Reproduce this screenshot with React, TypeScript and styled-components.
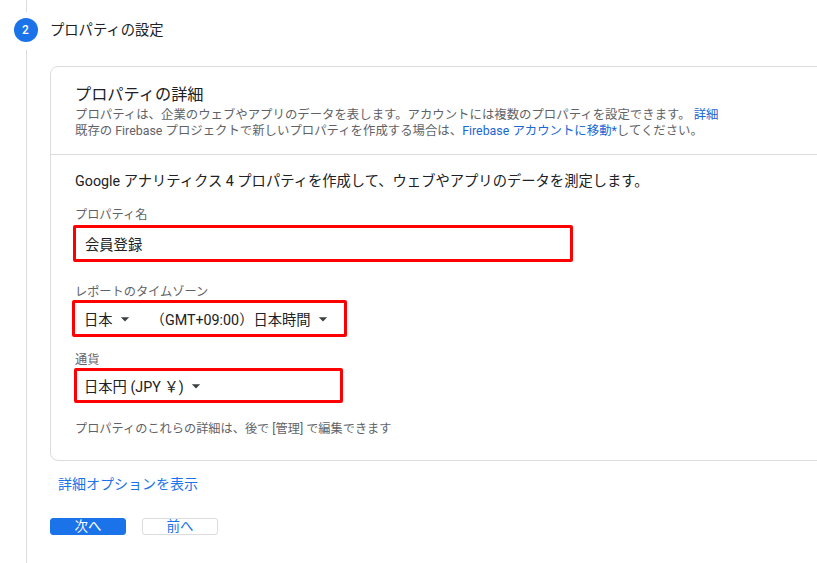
import React from 'react';
import styled, { createGlobalStyle } from 'styled-components';

const GlobalStyle = createGlobalStyle`
  html, body {
    margin: 0;
    padding: 0;
    background: #ffffff;
    font-family: Roboto, "Noto Sans CJK JP", sans-serif;
    color: #202124;
    overflow: hidden;
  }
`;

const Page = styled.div`
  display: grid;
  grid-template-columns: 50px 1fr;
  min-height: 563px;
`;

const Rail = styled.div`
  display: flex;
  flex-direction: column;
  align-items: center;
`;

const RailLine = styled.div<{ $grow?: boolean; $h?: number }>`
  width: 1px;
  background: #dadce0;
  margin-left: 3px;
  height: ${p => (p.$h ? `${p.$h}px` : 'auto')};
  flex: ${p => (p.$grow ? 1 : 'none')};
`;

const StepCircle = styled.div`
  width: 24px;
  height: 24px;
  border-radius: 50%;
  background: #1a73e8;
  color: #fff;
  font-size: 12px;
  font-weight: 500;
  display: flex;
  align-items: center;
  justify-content: center;
  margin: 6px 0 8px 1px;
`;

const Content = styled.div`
  overflow: hidden;
  padding-top: 18px;
`;

const StepTitle = styled.div`
  font-size: 14.3px;
  line-height: 24px;
  height: 24px;
  color: #202124;
`;

const Card = styled.div`
  margin-top: 24px;
  width: calc(100% + 20px);
  border: 1px solid #dadce0;
  border-radius: 8px;
  box-sizing: border-box;
`;

const CardHeader = styled.div`
  padding: 16px 24px 15px;
  border-bottom: 1px solid #dadce0;
`;

const CardTitle = styled.div`
  font-size: 16.2px;
  line-height: 24px;
  color: #202124;
`;

const Desc = styled.div`
  font-size: 12.4px;
  line-height: 16px;
  color: #5f6368;
  white-space: nowrap;
`;

const Link = styled.a`
  color: #1967d2;
  text-decoration: none;
`;

const CardBody = styled.div`
  padding: 16px 24px 23px;
`;

const Intro = styled.div`
  font-size: 14.3px;
  line-height: 20px;
  color: #202124;
  margin-bottom: 16px;
`;

const FieldLabel = styled.div<{ $gap: number; $top?: number }>`
  font-size: 12.2px;
  line-height: 16px;
  color: #5f6368;
  margin-top: ${p => p.$top ?? 0}px;
  margin-bottom: ${p => p.$gap}px;
`;

const Highlight = styled.div<{ $w: number; $h: number; $shift: number; $pad: number }>`
  width: ${p => p.$w}px;
  height: ${p => p.$h}px;
  margin-left: ${p => p.$shift}px;
  border: 3px solid #ff0000;
  border-radius: 2px;
  box-sizing: border-box;
  display: flex;
  align-items: center;
  padding-left: ${p => p.$pad}px;
  font-size: 14.3px;
  color: #202124;
`;

const Select = styled.span<{ $gap?: number }>`
  display: inline-flex;
  align-items: center;
  margin-right: ${p => p.$gap ?? 0}px;
  white-space: nowrap;
`;

const Caret = styled.svg`
  width: 20px;
  height: 20px;
  margin-left: 2px;
  fill: #3c4043;
`;

const Note = styled.div`
  margin-top: 18px;
  font-size: 12.2px;
  line-height: 16px;
  color: #5f6368;
`;

const MoreLink = styled.a`
  display: block;
  margin: 13px 0 0 8px;
  font-size: 14px;
  line-height: 20px;
  color: #1a73e8;
  text-decoration: none;
`;

const Actions = styled.div`
  display: flex;
  gap: 16px;
  margin-top: 24px;
`;

const Button = styled.button<{ $primary?: boolean }>`
  width: 76px;
  height: 17px;
  padding: 0;
  border-radius: 3px;
  font-family: inherit;
  font-size: 13.5px;
  line-height: 15px;
  cursor: pointer;
  box-sizing: border-box;
  border: 1px solid ${p => (p.$primary ? '#1a73e8' : '#dadce0')};
  background: ${p => (p.$primary ? '#1a73e8' : '#ffffff')};
  color: ${p => (p.$primary ? '#ffffff' : '#1a73e8')};
`;

const DropArrow = () => (
  <Caret viewBox="0 0 24 24">
    <path d="M7 10l5 5 5-5z" />
  </Caret>
);

const App: React.FC = () => (
  <>
    <GlobalStyle />
    <Page>
      <Rail>
        <RailLine $h={12} />
        <StepCircle>2</StepCircle>
        <RailLine $grow />
      </Rail>
      <Content>
        <StepTitle>プロパティの設定</StepTitle>
        <Card>
          <CardHeader>
            <CardTitle>プロパティの詳細</CardTitle>
            <Desc>
              プロパティは、企業のウェブやアプリのデータを表します。アカウントには複数のプロパティを設定できます。{' '}
              <Link href="#">詳細</Link>
            </Desc>
            <Desc>
              既存の Firebase プロジェクトで新しいプロパティを作成する場合は、
              <Link href="#">Firebase アカウントに移動*</Link>してください。
            </Desc>
          </CardHeader>
          <CardBody>
            <Intro>Google アナリティクス 4 プロパティを作成して、ウェブやアプリのデータを測定します。</Intro>

            <FieldLabel $gap={2}>プロパティ名</FieldLabel>
            <Highlight $w={500} $h={37} $shift={-2} $pad={9}>会員登録</Highlight>

            <FieldLabel $top={22} $gap={0}>レポートのタイムゾーン</FieldLabel>
            <Highlight $w={275} $h={37} $shift={-3} $pad={9}>
              <Select $gap={16}>
                日本
                <DropArrow />
              </Select>
              <Select>
                （GMT+09:00）日本時間
                <DropArrow />
              </Select>
            </Highlight>

            <FieldLabel $top={15} $gap={0}>通貨</FieldLabel>
            <Highlight $w={269} $h={35} $shift={-1} $pad={7}>
              <Select>
                日本円 (JPY ￥)
                <DropArrow />
              </Select>
            </Highlight>

            <Note>プロパティのこれらの詳細は、後で [管理] で編集できます</Note>
          </CardBody>
        </Card>
        <MoreLink href="#">詳細オプションを表示</MoreLink>
        <Actions>
          <Button $primary>次へ</Button>
          <Button>前へ</Button>
        </Actions>
      </Content>
    </Page>
  </>
);

export default App;
